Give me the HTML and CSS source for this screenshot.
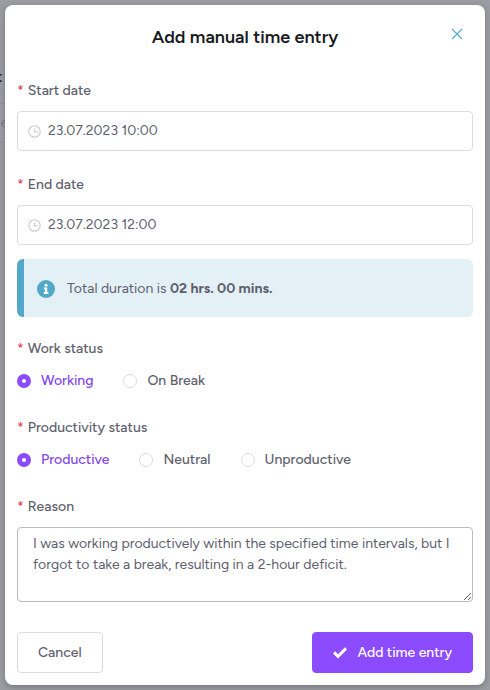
FILE: index.html
```html
<!DOCTYPE html>
<html lang="en">
<head>
    <meta charset="utf-8">
    <meta name="viewport" content="width=device-width, initial-scale=1">
    <title>Add manual time entry</title>
    <link rel="stylesheet" href="styles.css">
</head>
<body>
    <div class="page-behind" aria-hidden="true">
        <div class="page-title">t</div>
        <div class="page-search">se</div>
    </div>

    <div class="modal" role="dialog" aria-labelledby="modalTitle">
        <div class="modal-header">
            <h1 class="modal-title" id="modalTitle">Add manual time entry</h1>
            <button class="modal-close" type="button" aria-label="Close">
                <svg width="12" height="12" viewBox="0 0 12 12" fill="none" stroke="#52a8c8" stroke-width="1.1">
                    <path d="M1 1l10 10M11 1L1 11"/>
                </svg>
            </button>
        </div>

        <form class="entry-form">
            <div class="field">
                <label class="field-label" for="startDate">Start date</label>
                <div class="date-box">
                    <svg class="clock" width="13" height="13" viewBox="0 0 13 13" fill="none" stroke="#cfcfd3">
                        <circle cx="6.5" cy="6.5" r="5.7" stroke-width="1.2"/>
                        <path d="M6.5 3.5v3.4h3" stroke-width="1.2"/>
                    </svg>
                    <input class="date-input" id="startDate" type="text" value="23.07.2023 10:00">
                </div>
            </div>

            <div class="field field-end">
                <label class="field-label" for="endDate">End date</label>
                <div class="date-box">
                    <svg class="clock" width="13" height="13" viewBox="0 0 13 13" fill="none" stroke="#cfcfd3">
                        <circle cx="6.5" cy="6.5" r="5.7" stroke-width="1.2"/>
                        <path d="M6.5 3.5v3.4h3" stroke-width="1.2"/>
                    </svg>
                    <input class="date-input" id="endDate" type="text" value="23.07.2023 12:00">
                </div>
            </div>

            <div class="duration">
                <svg width="18" height="18" viewBox="0 0 18 18">
                    <circle cx="9" cy="9" r="9" fill="#52a8c8"/>
                    <circle cx="9" cy="5.2" r="1.5" fill="#fff"/>
                    <path d="M6.8 7.5h3.4v4.7h1.2v1.7H6.7v-1.7h1.2V9.2H6.8z" fill="#fff"/>
                </svg>
                <span>Total duration is <strong>02 hrs. 00 mins.</strong></span>
            </div>

            <fieldset class="field radio-field">
                <legend class="field-label">Work status</legend>
                <div class="radio-row">
                    <label class="radio"><input type="radio" name="work" checked><span>Working</span></label>
                    <label class="radio"><input type="radio" name="work"><span>On Break</span></label>
                </div>
            </fieldset>

            <fieldset class="field radio-field">
                <legend class="field-label">Productivity status</legend>
                <div class="radio-row">
                    <label class="radio"><input type="radio" name="productivity" checked><span>Productive</span></label>
                    <label class="radio"><input type="radio" name="productivity"><span>Neutral</span></label>
                    <label class="radio"><input type="radio" name="productivity"><span>Unproductive</span></label>
                </div>
            </fieldset>

            <div class="field field-reason">
                <label class="field-label" for="reason">Reason</label>
                <textarea class="reason" id="reason">I was working productively within the specified time intervals, but I forgot to take a break, resulting in a 2-hour deficit.</textarea>
            </div>

            <div class="actions">
                <button class="btn" type="button">Cancel</button>
                <button class="btn btn-primary" type="submit">
                    <svg width="14" height="12" viewBox="0 0 14 12" fill="none" stroke="#fff" stroke-width="3">
                        <path d="M1 5.4l4 3.9L13 1.4"/>
                    </svg>
                    Add time entry
                </button>
            </div>
        </form>
    </div>
</body>
</html>
```
FILE: styles.css
```css
* {
    box-sizing: border-box;
}
body {
    margin: 0;
    padding: 5px;
    min-height: 100vh;
    background-color: #9b9da2;
    font-family: Figtree, Lato, sans-serif;
    font-size: 14px;
    line-height: 22px;
    color: #5e606e;
}
button,
input,
textarea {
    font: inherit;
    color: inherit;
}
/* page under the dimmed backdrop */
.page-behind {
    position: absolute;
    top: 66px;
    left: 0;
    width: 50%;
    overflow: hidden;
}
.page-title {
    margin-left: -4px;
    height: 37px;
    color: #22232f;
    font-size: 16px;
    font-weight: 600;
}
.page-search {
    height: 40px;
    padding-top: 8px;
    border-top: 1px solid #9093a0;
    border-bottom: 1px solid #9093a0;
    background-color: #9d9da7;
    margin-left: -6px;
    color: #7c7e88;
}
.modal {
    position: relative;
    padding: 12px;
    background-color: #fff;
    border-radius: 8px;
    box-shadow: 0 2px 6px rgba(0, 0, 0, 0.25);
}
.modal-header {
    position: relative;
    padding: 8px 40px 30px;
    text-align: center;
}
.modal-title {
    margin: 0;
    font-size: 18px;
    line-height: 24px;
    font-weight: 600;
    color: #171923;
}
.modal-close {
    position: absolute;
    top: 6px;
    right: 5px;
    display: flex;
    padding: 5px;
    border: none;
    background: none;
    cursor: pointer;
}
.entry-form {
    margin: 0;
}
.field {
    margin: 0 0 22px;
    padding: 0;
    border: none;
    min-width: 0;
}
.field-end {
    margin-bottom: 14px;
}
.field-label {
    display: block;
    margin-bottom: 8px;
    padding: 0;
    line-height: 24px;
    font-weight: 500;
}
.field-label::before {
    content: "*";
    margin-right: 4px;
    color: #dc4a68;
}
.date-box {
    display: flex;
    align-items: center;
    gap: 7px;
    height: 40px;
    padding: 0 10px;
    border: 1px solid #dcdce0;
    border-radius: 4px;
}
.date-input {
    flex: 1;
    min-width: 0;
    padding: 0;
    border: none;
    outline: none;
    background: none;
}
.duration {
    display: flex;
    align-items: center;
    gap: 12px;
    margin-bottom: 20px;
    padding: 19px 13px 17px;
    border-left: 7px solid #52a8c8;
    border-radius: 6px;
    background-color: #e3f0f6;
}
.radio-field {
    margin-bottom: 23px;
}
.radio-row {
    display: flex;
    flex-wrap: wrap;
    gap: 30px;
}
.radio {
    display: flex;
    align-items: center;
    gap: 10px;
    line-height: 24px;
    font-weight: 500;
    cursor: pointer;
}
.radio input {
    appearance: none;
    width: 14px;
    height: 14px;
    margin: 0;
    border: 1px solid #dcdce0;
    border-radius: 50%;
    background-color: #fff;
}
.radio input:checked {
    border: 5px solid #8c4bff;
}
.radio input:checked + span {
    color: #8345ee;
}
.field-reason {
    margin-bottom: 30px;
}
.reason {
    display: block;
    width: 100%;
    height: 75px;
    padding: 5px 15px;
    border: 1px solid #babac0;
    border-radius: 4px;
    outline: none;
    line-height: 21px;
    resize: vertical;
}
.actions {
    display: flex;
    justify-content: space-between;
}
.btn {
    display: flex;
    align-items: center;
    gap: 10px;
    height: 41px;
    padding: 0 20px;
    border: 1px solid #dcdce0;
    border-radius: 4px;
    background-color: #fff;
    font-weight: 500;
    cursor: pointer;
}
.btn-primary {
    border-color: #8c4bff;
    background-color: #8c4bff;
    color: #fff;
}
```
